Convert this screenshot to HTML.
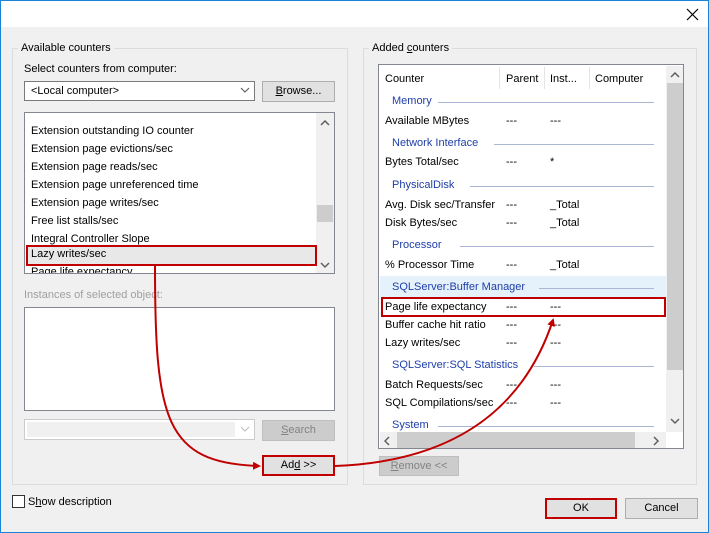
<!DOCTYPE html>
<html><head><meta charset="utf-8"><style>
*{box-sizing:border-box;margin:0;padding:0}
body{width:709px;height:533px;position:relative;overflow:hidden;background:#f0f0f0;font-family:"Liberation Sans",sans-serif;font-size:11px;color:#000}
.a{position:absolute;white-space:nowrap}
.grp{position:absolute;border:1px solid #dcdcdc}
.btn{position:absolute;background:#e1e1e1;border:1px solid #adadad;text-align:center;line-height:18px}
.box{position:absolute;background:#fff;border:1px solid #828790}
.hdr{color:#1e3ea8}
.ln{position:absolute;height:1px;background:#a9b6d4}
</style></head><body>
<div class="a" style="left:0;top:0;width:709px;height:27px;background:#fff"></div>
<div class="a" style="left:0;top:0;width:709px;height:1px;background:#1883d7"></div>
<div class="a" style="left:0;top:0;width:1px;height:533px;background:#1883d7"></div>
<div class="a" style="left:708px;top:0;width:1px;height:533px;background:#1883d7"></div>
<div class="a" style="left:0;top:532px;width:709px;height:1px;background:#1883d7"></div>
<svg class="a" style="left:686px;top:8px" width="13" height="13"><path d="M1 1L12 12M12 1L1 12" stroke="#000" stroke-width="1.2"/></svg>

<div class="grp" style="left:12px;top:48px;width:336px;height:437px"></div>
<div class="a" style="left:18px;top:42px;background:#f0f0f0;padding:0 3px">Available counters</div>
<div class="a" style="left:24px;top:63px">Select counters from computer:</div>
<div class="box" style="left:24px;top:81px;width:231px;height:20px;border-color:#7a7a7a;padding:3px 6px">&lt;Local computer&gt;</div>
<svg class="a" style="left:240px;top:87px" width="10" height="7"><path d="M1 1L5 5L9 1" fill="none" stroke="#555"/></svg>
<div class="btn" style="left:262px;top:81px;width:73px;height:21px"><u>B</u>rowse...</div>

<div class="box" style="left:24px;top:112px;width:311px;height:162px;overflow:hidden">
<div class="a" style="left:6px;top:9px;line-height:18px">Extension outstanding IO counter<br>Extension page evictions/sec<br>Extension page reads/sec<br>Extension page unreferenced time<br>Extension page writes/sec<br>Free list stalls/sec<br>Integral Controller Slope</div>
<div class="a" style="left:1px;top:133px;width:290px;height:18px;background:#e8e8e8"></div>
<div class="a" style="left:6px;top:135px">Lazy writes/sec</div>
<div class="a" style="left:6px;top:153px">Page life expectancy</div>
<div class="a" style="left:291px;top:0;width:18px;height:160px;background:#f0f0f0"></div>
<div class="a" style="left:292px;top:92px;width:16px;height:17px;background:#cdcdcd"></div>
<svg class="a" style="left:295px;top:7px" width="10" height="7"><path d="M1 5L5 1L9 5" fill="none" stroke="#606060" stroke-width="1.5"/></svg>
<svg class="a" style="left:295px;top:149px" width="10" height="7"><path d="M1 1L5 5L9 1" fill="none" stroke="#606060" stroke-width="1.5"/></svg>
</div>
<div class="a" style="left:26px;top:245px;width:291px;height:21px;border:2px solid #c00000"></div>

<div class="a" style="left:24px;top:289px;color:#a0a0a0">Instances of selected object:</div>
<div class="box" style="left:24px;top:307px;width:311px;height:104px"></div>
<div class="a" style="left:24px;top:419px;width:231px;height:21px;border:1px solid #cccccc;background:#fff"><div class="a" style="left:2px;top:2px;width:208px;height:15px;background:#f0f0f0"></div></div>
<svg class="a" style="left:240px;top:426px" width="10" height="7"><path d="M1 1L5 5L9 1" fill="none" stroke="#bbb"/></svg>
<div class="btn" style="left:262px;top:420px;width:73px;height:21px;background:#cccccc;border-color:#bfbfbf;color:#838383"><u>S</u>earch</div>
<div class="btn" style="left:262px;top:455px;width:73px;height:21px;border:2px solid #c00000;line-height:17px">Ad<u>d</u> &gt;&gt;</div>

<div class="a" style="left:12px;top:495px;width:13px;height:13px;border:1px solid #333;background:#fff"></div>
<div class="a" style="left:28px;top:496px">S<u>h</u>ow description</div>

<div class="grp" style="left:363px;top:48px;width:334px;height:437px"></div>
<div class="a" style="left:369px;top:42px;background:#f0f0f0;padding:0 3px">Added <u>c</u>ounters</div>
<div class="box" style="left:378px;top:64px;width:306px;height:385px;overflow:hidden">
<div class="a" style="left:6px;top:8px">Counter</div>
<div class="a" style="left:120px;top:2px;width:1px;height:22px;background:#e5e5e5"></div>
<div class="a" style="left:127px;top:8px">Parent</div>
<div class="a" style="left:165px;top:2px;width:1px;height:22px;background:#e5e5e5"></div>
<div class="a" style="left:171px;top:8px">Inst...</div>
<div class="a" style="left:210px;top:2px;width:1px;height:22px;background:#e5e5e5"></div>
<div class="a" style="left:216px;top:8px">Computer</div>
<div class="a" style="left:1px;top:211px;width:286px;height:21px;background:#e5f1fb"></div>

<div class="a hdr" style="left:13px;top:30px">Memory</div><div class="ln" style="left:59px;top:37px;width:216px"></div>
<div class="a" style="left:6px;top:50px">Available MBytes</div><div class="a" style="left:127px;top:50px">---</div><div class="a" style="left:171px;top:50px">---</div>
<div class="a hdr" style="left:13px;top:72px">Network Interface</div><div class="ln" style="left:115px;top:79px;width:160px"></div>
<div class="a" style="left:6px;top:91px">Bytes Total/sec</div><div class="a" style="left:127px;top:91px">---</div><div class="a" style="left:171px;top:91px">*</div>
<div class="a hdr" style="left:13px;top:114px">PhysicalDisk</div><div class="ln" style="left:91px;top:121px;width:184px"></div>
<div class="a" style="left:6px;top:134px">Avg. Disk sec/Transfer</div><div class="a" style="left:127px;top:134px">---</div><div class="a" style="left:171px;top:134px">_Total</div>
<div class="a" style="left:6px;top:152px">Disk Bytes/sec</div><div class="a" style="left:127px;top:152px">---</div><div class="a" style="left:171px;top:152px">_Total</div>
<div class="a hdr" style="left:13px;top:174px">Processor</div><div class="ln" style="left:81px;top:181px;width:194px"></div>
<div class="a" style="left:6px;top:194px">% Processor Time</div><div class="a" style="left:127px;top:194px">---</div><div class="a" style="left:171px;top:194px">_Total</div>
<div class="a hdr" style="left:13px;top:216px">SQLServer:Buffer Manager</div><div class="ln" style="left:160px;top:223px;width:115px"></div>
<div class="a" style="left:6px;top:236px">Page life expectancy</div><div class="a" style="left:127px;top:236px">---</div><div class="a" style="left:171px;top:236px">---</div>
<div class="a" style="left:6px;top:254px">Buffer cache hit ratio</div><div class="a" style="left:127px;top:254px">---</div><div class="a" style="left:171px;top:254px">---</div>
<div class="a" style="left:6px;top:272px">Lazy writes/sec</div><div class="a" style="left:127px;top:272px">---</div><div class="a" style="left:171px;top:272px">---</div>
<div class="a hdr" style="left:13px;top:294px">SQLServer:SQL Statistics</div><div class="ln" style="left:155px;top:301px;width:120px"></div>
<div class="a" style="left:6px;top:314px">Batch Requests/sec</div><div class="a" style="left:127px;top:314px">---</div><div class="a" style="left:171px;top:314px">---</div>
<div class="a" style="left:6px;top:332px">SQL Compilations/sec</div><div class="a" style="left:127px;top:332px">---</div><div class="a" style="left:171px;top:332px">---</div>
<div class="a hdr" style="left:13px;top:354px">System</div><div class="ln" style="left:59px;top:361px;width:216px"></div>

<div class="a" style="left:287px;top:1px;width:18px;height:366px;background:#f0f0f0"></div>
<div class="a" style="left:288px;top:18px;width:16px;height:287px;background:#cdcdcd"></div>
<svg class="a" style="left:291px;top:7px" width="10" height="7"><path d="M1 5L5 1L9 5" fill="none" stroke="#606060" stroke-width="1.5"/></svg>
<svg class="a" style="left:291px;top:353px" width="10" height="7"><path d="M1 1L5 5L9 1" fill="none" stroke="#606060" stroke-width="1.5"/></svg>
<div class="a" style="left:1px;top:367px;width:286px;height:16px;background:#f0f0f0"></div>
<div class="a" style="left:18px;top:367px;width:238px;height:16px;background:#cdcdcd"></div>
<svg class="a" style="left:5px;top:371px" width="7" height="10"><path d="M5 1L1 5L5 9" fill="none" stroke="#606060" stroke-width="1.5"/></svg>
<svg class="a" style="left:274px;top:371px" width="7" height="10"><path d="M1 1L5 5L1 9" fill="none" stroke="#606060" stroke-width="1.5"/></svg>
</div>
<div class="a" style="left:381px;top:297px;width:285px;height:20px;border:2px solid #c00000"></div>
<div class="btn" style="left:379px;top:456px;width:80px;height:20px;background:#cccccc;border-color:#bfbfbf;color:#838383"><u>R</u>emove &lt;&lt;</div>

<div class="btn" style="left:545px;top:498px;width:72px;height:21px;border:2px solid #c00000;line-height:17px">OK</div>
<div class="btn" style="left:625px;top:498px;width:73px;height:21px">Cancel</div>

<svg class="a" style="left:0;top:0" width="709" height="533">
<defs><marker id="m" markerWidth="8" markerHeight="8" refX="6" refY="4" orient="auto" markerUnits="userSpaceOnUse"><path d="M0 0L8 4L0 8Z" fill="#c00000"/></marker></defs>
<path d="M155 266 C155 420,165 463,259 466" fill="none" stroke="#c00000" stroke-width="2" marker-end="url(#m)"/>
<path d="M335 466 C440 462,520 420,553 320" fill="none" stroke="#c00000" stroke-width="2" marker-end="url(#m)"/>
</svg>
</body></html>
